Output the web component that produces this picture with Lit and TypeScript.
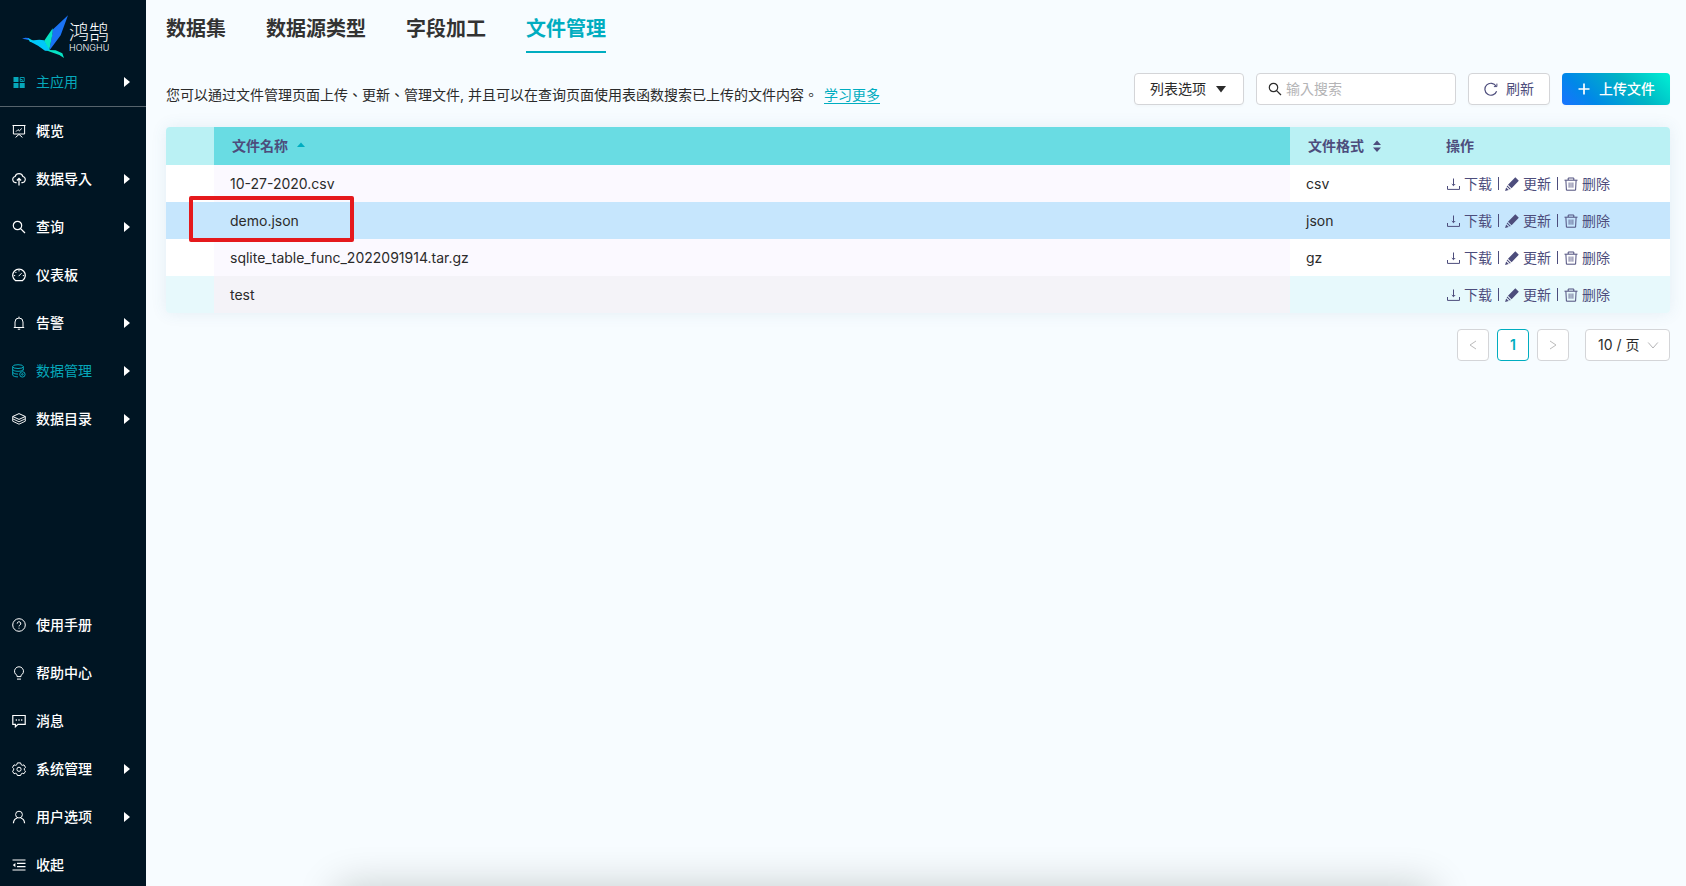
import { LitElement, html, css, svg, nothing } from "lit";
import { customElement, property, state } from "lit/decorators.js";
import { classMap } from "lit/directives/class-map.js";

const shapes: Record<string, unknown> = {
  apps: svg`<path fill="currentColor" stroke="none" d="M1.5 2h5v5h-5zM1.5 8h5v5h-5zM7.7 8h5v5h-5z"/><path d="M8.2 2.5h4v4h-4zM8.2 4.5h2v2" stroke-width=".9"/>`,
  overview: svg`<path d="M0.5 1.500h13M1.400 1.700v8.300h11.200v-8.300M3.600 13.400l3.400-3 3.400 3"/><path d="M4 7.600l2-2 1.400 1.200 2.400-2.300"/>`,
  upload: svg`<path d="M4.600 10.600H3.600a3.100 3.100 0 0 1-.5-6.100 4.100 4.100 0 0 1 7.800 0 3.100 3.100 0 0 1-.5 6.100h-1" stroke-width="1.100"/><path d="M7 13.400V6.600M4.900 8.500l2.100-2.100 2.100 2.100" stroke-width="1.300"/>`,
  search: svg`<circle cx="5.5" cy="5.5" r="4.2" stroke-width="1.2"/><path d="M8.6 8.6l4.4 4.4" stroke-width="1.3"/>`,
  gauge: svg`<path d="M3.4 12.6h7.2a6.3 6.3 0 1 0-7.2 0z" stroke-width="1.2"/><path d="M7 2v1.4M1.8 7.6h1.4M10.8 7.6h1.4M3.4 4l1 1M6.6 8.2l3-3"/>`,
  bell: svg`<path d="M3 11.3V6a4 4 0 0 1 8 0v5.3M1.8 11.5h10.4M5.8 13.2h2.4M7 .6v1.2"/>`,
  database: svg`<ellipse cx="6" cy="2.6" rx="5.300" ry="1.9"/><path d="M.7 2.600v8.400c0 1 2.400 1.900 5.300 1.900M11.300 2.600v3.800M.7 5.400c0 1 2.400 1.900 5.300 1.900s5.300-.9 5.300-1.900M.7 8.200c0 1 2.400 1.900 5.300 1.900"/><circle cx="10.400" cy="10.400" r="2.700"/><circle cx="10.400" cy="10.400" r=".8"/>`,
  layers: svg`<path d="M7 1.600l6.300 2.900-6.300 2.900-6.300-2.900z"/><path d="M.7 6.800l6.300 3 6.300-3M.7 9.200l6.300 3 6.300-3M.7 4.500v4.700M13.300 4.500v4.700" stroke-width=".9"/>`,
  help: svg`<circle cx="7" cy="7" r="6.300"/><path d="M5.200 5.600a1.800 1.800 0 1 1 2.700 1.500c-.6.4-.9.700-.9 1.300M7 9.700v1"/>`,
  bulb: svg`<path d="M5 10.600V9.300a4.500 4.500 0 1 1 4 0v1.300zM5 13.100h4"/>`,
  message: svg`<path d="M.8 1.500h12.400v8.900H6l-2.600 2.400v-2.400H.8z" stroke-width="1.200"/><path d="M3.700 6h1.200M6.400 6h1.200M9.100 6h1.200" stroke-width="1.300"/>`,
  gear: svg`<path d="M5.400 .9h3.200l.5 1.700 1.200.7 1.700-.4 1.500 2.500-1.200 1.200v1.400l1.200 1.200-1.500 2.500-1.700-.4-1.200.7-.5 1.500H5.400l-.5-1.500-1.200-.7-1.700.4L.5 9.200 1.700 8V6.600L.5 5.400 2 2.900l1.700.4 1.200-.7z"/><circle cx="7" cy="7.300" r="2.100"/>`,
  user: svg`<circle cx="7" cy="4.600" r="3.400"/><path d="M1.400 13.200c.3-3 2.100-4.800 4-5.200M12.600 13.200c-.3-3-2.100-4.800-4-5.200" stroke-width="1.200"/>`,
  collapse: svg`<path d="M.5 2h13M5 5.400h8.500M5 8.700h8.500M.5 12h13" stroke-width="1.200"/><path fill="currentColor" stroke="none" d="M3.400 4.900v4.300L.8 7.050z"/>`,
  refresh: svg`<path d="M12.600 9.200a6 6 0 1 1-.5-5" stroke-width="1.200"/><path d="M12.900 1.600v3H9.900"/>`,
  plus: svg`<path d="M7 1.500v11M1.500 7h11" stroke-width="1.700"/>`,
  download: svg`<path d="M1.500 9v3.400h12V9"/><path d="M7.500 1.500v7M5.800 7l1.700 1.700L9.200 7"/>`,
  pencil: svg`<path fill="currentColor" stroke="none" d="M10.300 .3l3.500 3.500L6.600 11.300 3 7.700zM2.300 8.500l3.500 3.500-1 .6-3.100-3.100zM1.100 10.400l2.700 2.700-3.700.8z"/>`,
  trash: svg`<path d="M.5 3.200h13M4.200 3V1h5.600v2M1.900 3.400l.5 9.800h9.200l.5-9.800"/><path d="M5.100 5.500v5.200M8.900 5.500v5.200M7 5.500v5.200" stroke-width=".8"/>`,
  left: svg`<path d="M10 3L4 7l6 4"/>`,
  right: svg`<path d="M4 3l6 4-6 4"/>`,
  down: svg`<path d="M2.200 4.500L7 10l4.800-5.500"/>`,
};

@customElement("hh-icon")
class HhIcon extends LitElement {
  static styles = css`
    :host { display: inline-flex; flex: none; }
    .icon { width: 14px; height: 14px; display: block; fill: none; stroke: currentColor; }
  `;
  @property() name = "";
  render() {
    return html`<svg class="icon" viewBox="0 0 14 14" aria-hidden="true">${shapes[this.name]}</svg>`;
  }
}

interface MenuItem {
  icon: string;
  label: string;
  more?: boolean;
  active?: boolean;
}

const mainMenu: MenuItem[] = [
  { icon: "overview", label: "概览" },
  { icon: "upload", label: "数据导入", more: true },
  { icon: "search", label: "查询", more: true },
  { icon: "gauge", label: "仪表板" },
  { icon: "bell", label: "告警", more: true },
  { icon: "database", label: "数据管理", more: true, active: true },
  { icon: "layers", label: "数据目录", more: true },
];

const footMenu: MenuItem[] = [
  { icon: "help", label: "使用手册" },
  { icon: "bulb", label: "帮助中心" },
  { icon: "message", label: "消息" },
  { icon: "gear", label: "系统管理", more: true },
  { icon: "user", label: "用户选项", more: true },
  { icon: "collapse", label: "收起" },
];

@customElement("hh-sidebar")
class HhSidebar extends LitElement {
  static styles = css`
    :host {
      display: flex;
      flex-direction: column;
      width: 146px;
      flex: none;
      height: 100vh;
      overflow: hidden;
      background: #001523;
      color: #fff;
    }
    .logo { display: flex; align-items: center; gap: 1px; padding: 15px 22px 0; }
    .bird { width: 46px; height: 43px; flex: none; }
    .brand { display: flex; flex-direction: column; padding-bottom: 2px; }
    .name { font-size: 20px; line-height: 24px; font-weight: 300; white-space: nowrap; }
    .latin { font-size: 9px; line-height: 5px; font-weight: 300; }
    .app { border-bottom: 1px solid #56636c; }
    .item {
      display: flex;
      align-items: center;
      gap: 10px;
      height: 48px;
      padding: 0 16px 0 12px;
      color: inherit;
      font-size: 14px;
      font-weight: 500;
      text-decoration: none;
    }
    .item.active { color: #06a8bb; font-weight: 400; }
    .label { flex: 1; }
    .arrow { width: 6px; height: 10px; fill: #fff; }
    .foot { margin: auto 0 -3px; }
  `;
  item(i: MenuItem) {
    return html`<a class=${classMap({ item: true, active: !!i.active })} href="#">
      <hh-icon name=${i.icon}></hh-icon><span class="label">${i.label}</span>
      ${i.more ? html`<svg class="arrow" viewBox="0 0 6 10"><path d="M0 0l6 5-6 5z" /></svg>` : nothing}
    </a>`;
  }
  render() {
    return html`
      <div class="logo">
        <svg class="bird" viewBox="66 44 138 129" aria-hidden="true">
          <path fill="#1a73f5" d="M204 45L156 90l1 10-10 52 35-47z" />
          <path fill="#06e3c4" d="M158 84l-26 38 15 31 10-50z" />
          <path fill="#1a73f5" d="M66 115l10-3 10 1 8 8-18-4z" />
          <path fill="#00e1e6" d="M84 113l30 16-24-5z" />
          <path fill="#00c8fa" d="M86 121l32-3 14 2 18 32-15-1-21-15z" />
          <path fill="#06e3c4" d="M147 149l20 1 20 9 5 14-14-9-36-13z" />
        </svg>
        <div class="brand"><span class="name">鸿鹄</span><span class="latin">HONGHU</span></div>
      </div>
      <div class="app">${this.item({ icon: "apps", label: "主应用", more: true, active: true })}</div>
      <nav>${mainMenu.map((i) => this.item(i))}</nav>
      <nav class="foot">${footMenu.map((i) => this.item(i))}</nav>
    `;
  }
}

const files = [
  { name: "10-27-2020.csv", format: "csv" },
  { name: "demo.json", format: "json", marked: true },
  { name: "sqlite_table_func_2022091914.tar.gz", format: "gz" },
  { name: "test", format: "" },
];

@customElement("hh-file-table")
class HhFileTable extends LitElement {
  static styles = css`
    :host { display: block; border-radius: 4px; box-shadow: 0 0 16px rgba(60, 110, 150, 0.1); }
    table { width: 100%; table-layout: fixed; border-collapse: separate; border-spacing: 0; font-size: 14px; line-height: 22px; }
    .col-pad { width: 48px; }
    .col-format { width: 140px; }
    .col-ops { width: 240px; }
    th, td { padding: 0 16px; text-align: left; }
    th { height: 38px; background: #baf1f4; color: #4d4d7c; font-weight: 600; }
    th.name { background: #69dce3; }
    th:first-child { border-top-left-radius: 4px; }
    th:last-child { border-top-right-radius: 4px; }
    tr:last-child td:first-child { border-bottom-left-radius: 4px; }
    tr:last-child td:last-child { border-bottom-right-radius: 4px; }
    td { height: 37px; background: #fff; color: #2b2b2b; }
    td.name { background: #fbf9ff; position: relative; }
    tr.tinted td { background: #e7f9fc; }
    tr.tinted td.name { background: #f4f3f8; }
    tr.marked td, tr.marked td.name { background: #c6e6fd; }
    .sort { display: inline-flex; align-items: center; gap: 9px; padding: 0 2px; border: 0; background: none; font: inherit; color: inherit; }
    .carets { width: 8px; height: 12px; fill: #4d4d7c; }
    .carets .on { fill: #00adc0; }
    .ops { display: flex; align-items: center; gap: 6px; }
    .op { display: inline-flex; align-items: center; gap: 4px; padding: 0; border: 0; background: none; font: inherit; color: #4d4d7c; }
    .bar { width: 1px; height: 13px; background: #4d4d7c; }
    .frame { position: absolute; left: -25px; top: -6px; width: 157px; height: 38px; border: 4px solid #e5191c; border-radius: 2px; z-index: 1; pointer-events: none; }
  `;
  render() {
    return html`<table>
      <colgroup><col class="col-pad" /><col /><col class="col-format" /><col class="col-ops" /></colgroup>
      <thead>
        <tr>
          <th></th>
          <th class="name">
            <button class="sort">文件名称<svg class="carets" viewBox="0 0 8 12"><path class="on" d="M0 7l4-4.500L8 7z" /></svg></button>
          </th>
          <th>
            <button class="sort">文件格式<svg class="carets" viewBox="0 0 8 12"><path d="M0 5l4-4.500L8 5zM0 7.500l4 4.500 4-4.500z" /></svg></button>
          </th>
          <th>操作</th>
        </tr>
      </thead>
      <tbody>
        ${files.map(
          (f, i) => html`<tr class=${classMap({ tinted: i % 2 === 1 && !f.marked, marked: !!f.marked })}>
            <td></td>
            <td class="name">${f.name}${f.marked ? html`<span class="frame"></span>` : nothing}</td>
            <td>${f.format}</td>
            <td>
              <div class="ops">
                <button class="op"><hh-icon name="download"></hh-icon>下载</button>
                <span class="bar"></span>
                <button class="op"><hh-icon name="pencil"></hh-icon>更新</button>
                <span class="bar"></span>
                <button class="op"><hh-icon name="trash"></hh-icon>删除</button>
              </div>
            </td>
          </tr>`
        )}
      </tbody>
    </table>`;
  }
}

@customElement("app-root")
class AppRoot extends LitElement {
  static styles = css`
    :host {
      display: flex;
      position: relative;
      min-height: 100vh;
      overflow: hidden;
      background: #f7fcff;
      color: #2b2b2b;
      font-family: Inter, "Noto Sans CJK TC", sans-serif;
      font-size: 14px;
      line-height: 22px;
    }
    * { box-sizing: border-box; }
    main { flex: 1; min-width: 0; padding: 0 16px 0 20px; }
    .tabs { display: flex; gap: 40px; }
    .tab { padding: 15px 0 8px; border-bottom: 2px solid transparent; font-size: 20px; line-height: 28px; font-weight: 600; color: #333; text-decoration: none; }
    .tab.on { color: #00adc0; border-color: #00adc0; }
    .bar { display: flex; align-items: flex-end; justify-content: space-between; gap: 24px; margin: 20px 0 22px; }
    .note { margin: 0; line-height: 20px; }
    .more { margin-left: 2px; color: #00adc0; text-decoration: none; border-bottom: 1px solid; }
    .tools { display: flex; gap: 12px; flex: none; }
    .btn {
      display: inline-flex;
      align-items: center;
      gap: 8px;
      height: 32px;
      padding: 0 15px;
      border: 1px solid #d4d5d8;
      border-radius: 4px;
      background: #fff;
      box-shadow: 0 2px 2px rgba(0, 0, 0, 0.02);
      color: #2b2b2b;
      font: inherit;
    }
    .btn.refresh { color: #4d4d7c; }
    .btn.primary { border: 0; color: #fff; font-weight: 500; background: linear-gradient(45deg, #1a73ff, #0088e8 25%, #00b4c4 62%, #00e8d2 95%); }
    .caret { width: 14px; height: 8px; fill: #2b2b2b; }
    .search { display: flex; align-items: center; gap: 4px; width: 200px; height: 32px; padding: 0 11px; border: 1px solid #d4d5d8; border-radius: 4px; background: #fff; }
    .search input { flex: 1; min-width: 0; padding: 0; border: 0; outline: 0; background: none; font: inherit; color: inherit; }
    .search input::placeholder { color: #b4b4b6; opacity: 1; }
    .pager { display: flex; justify-content: flex-end; gap: 8px; margin-top: 16px; }
    .page { display: inline-flex; align-items: center; justify-content: center; width: 32px; height: 32px; padding: 0; border: 1px solid #d4d5d8; border-radius: 4px; background: #fff; color: #bbb; font: inherit; }
    .page.on { border-color: #00adc0; color: #00adc0; font-weight: 600; }
    .size { display: grid; grid-template-columns: 1fr 34px; align-items: center; margin-left: 8px; width: 85px; height: 32px; color: #b4b4b6; }
    .size select { grid-area: 1 / 1 / 2 / 3; height: 32px; padding: 0 12px; border: 1px solid #d4d5d8; border-radius: 4px; background: #fff; color: #2b2b2b; font: inherit; appearance: none; }
    .size hh-icon { grid-area: 1 / 2; justify-self: center; z-index: 1; pointer-events: none; }
    .dock { position: absolute; top: 100%; left: 20%; right: 15%; height: 60px; box-shadow: 0 0 40px rgba(10, 20, 10, 0.2); }
  `;
  @state() tab = "文件管理";
  render() {
    return html`
      <hh-sidebar></hh-sidebar>
      <main>
        <nav class="tabs">
          ${["数据集", "数据源类型", "字段加工", "文件管理"].map(
            (t) => html`<a href="#" class=${classMap({ tab: true, on: t === this.tab })}>${t}</a>`
          )}
        </nav>
        <div class="bar">
          <p class="note">
            您可以通过文件管理页面上传、更新、管理文件, 并且可以在查询页面使用表函数搜索已上传的文件内容。
            <a class="more" href="#">学习更多</a>
          </p>
          <div class="tools">
            <button class="btn">列表选项<svg class="caret" viewBox="0 0 14 8"><path d="M2 1h10L7 7.500z" /></svg></button>
            <label class="search"><hh-icon name="search"></hh-icon><input type="text" aria-label="搜索" placeholder="输入搜索" /></label>
            <button class="btn refresh"><hh-icon name="refresh"></hh-icon>刷新</button>
            <button class="btn primary"><hh-icon name="plus"></hh-icon>上传文件</button>
          </div>
        </div>
        <hh-file-table></hh-file-table>
        <div class="pager">
          <button class="page" aria-label="上一页"><hh-icon name="left"></hh-icon></button>
          <button class="page on">1</button>
          <button class="page" aria-label="下一页"><hh-icon name="right"></hh-icon></button>
          <label class="size">
            <select aria-label="每页条数"><option>10 / 页</option></select>
            <hh-icon name="down"></hh-icon>
          </label>
        </div>
      </main>
      <div class="dock"></div>
    `;
  }
}
